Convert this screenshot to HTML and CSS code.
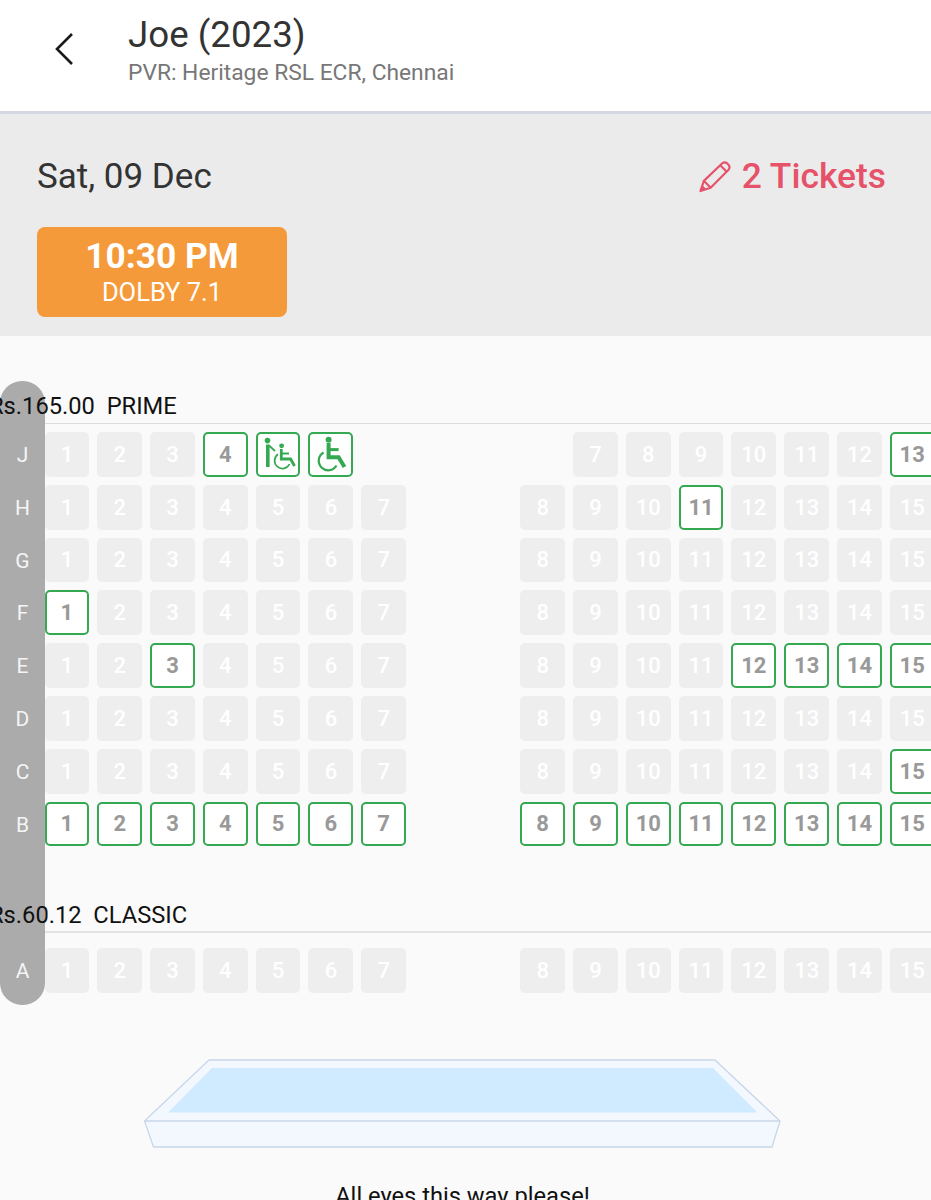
FILE: index.html
```html
<!DOCTYPE html>
<html lang="en">
<head>
    <meta charset="UTF-8">
    <meta name="viewport" content="width=device-width, initial-scale=1.0">
    <title>Joe (2023) - Seats</title>
    <link rel="stylesheet" href="styles.css">
</head>
<body>
    <div class="title-bar">
        <svg class="back-icon" width="20" height="34" viewBox="0 0 20 34"><path d="M18 2 L3 17 L18 32" fill="none" stroke="#1a1a1a" stroke-width="2.6"/></svg>
        <div>
            <h1>Joe (2023)</h1>
            <div class="subtitle">PVR: Heritage RSL ECR, Chennai</div>
        </div>
    </div>
    <div class="show-info">
        <div class="date-row">
            <span class="date">Sat, 09 Dec</span>
            <span class="tickets">
                <svg width="32" height="33" viewBox="0 0 33 33"><path d="M1.500 31.500 L5 21 L24 2.800 Q26.500 .8 29 3 L30.500 4.500 Q32.500 7 30.500 9.500 L12 28 Z M5 21 L12 28 M22 5 L28.500 11.500" fill="none" stroke="#e5526a" stroke-width="2.200" stroke-linejoin="round"/><path d="M1.500 31.500 L3.500 25.500 L7.500 29.500 Z" fill="#e5526a"/></svg>
                2 Tickets
            </span>
        </div>
        <div class="showtime">
            <div class="time">10:30 PM</div>
            <div class="format">DOLBY 7.1</div>
        </div>
    </div>
    <div class="seat-map">
        <div class="row-rail">
            <span>J</span><span>H</span><span>G</span><span>F</span><span>E</span><span>D</span><span>C</span><span>B</span>
            <span class="rail-a">A</span>
        </div>

        <div class="price-head prime"><span>Rs.165.00&nbsp; PRIME</span></div>
        <div class="rows">
            <div class="row">
                <div class="seat">1</div><div class="seat">2</div><div class="seat">3</div><div class="seat open">4</div>
                <div class="seat open">
                    <svg width="40" height="40" viewBox="0 0 40 40"><circle cx="9.500" cy="6.600" r="2.800" fill="#35a852"/><path d="M8 10.500 H11.600 V33 H8 Z" fill="#35a852"/><path d="M11 11.500 L17 17" stroke="#35a852" stroke-width="1.800"/><circle cx="23.600" cy="11.800" r="2.400" fill="#35a852"/><path d="M23.300 15 V25 H32.600 L36.500 32" fill="none" stroke="#35a852" stroke-width="2.800"/><path d="M24 19.500 H31" stroke="#35a852" stroke-width="2"/><path d="M20 20.300 A7.800 7.800 0 1 0 31.500 30" fill="none" stroke="#35a852" stroke-width="1.700"/></svg>
                </div>
                <div class="seat open">
                    <svg width="40" height="40" viewBox="0 0 40 40"><circle cx="17.600" cy="5.800" r="3" fill="#35a852"/><path d="M17.600 9 V23.300 H27.600 L33.500 33" fill="none" stroke="#35a852" stroke-width="4"/><path d="M18 15.600 H27.600" stroke="#35a852" stroke-width="3"/><path d="M12.600 18.500 A9.500 9.500 0 1 0 25.500 31.500" fill="none" stroke="#35a852" stroke-width="2.200"/></svg>
                </div>
                <div class="seat-empty"></div>
                <div class="seat-empty"></div><div class="seat">7</div><div class="seat">8</div><div class="seat">9</div><div class="seat">10</div><div class="seat">11</div><div class="seat">12</div><div class="seat open">13</div>
            </div>
            <div class="row">
                <div class="seat">1</div><div class="seat">2</div><div class="seat">3</div><div class="seat">4</div><div class="seat">5</div><div class="seat">6</div><div class="seat">7</div>
                <div class="seat">8</div><div class="seat">9</div><div class="seat">10</div><div class="seat open">11</div><div class="seat">12</div><div class="seat">13</div><div class="seat">14</div><div class="seat">15</div>
            </div>
            <div class="row">
                <div class="seat">1</div><div class="seat">2</div><div class="seat">3</div><div class="seat">4</div><div class="seat">5</div><div class="seat">6</div><div class="seat">7</div>
                <div class="seat">8</div><div class="seat">9</div><div class="seat">10</div><div class="seat">11</div><div class="seat">12</div><div class="seat">13</div><div class="seat">14</div><div class="seat">15</div>
            </div>
            <div class="row">
                <div class="seat open">1</div><div class="seat">2</div><div class="seat">3</div><div class="seat">4</div><div class="seat">5</div><div class="seat">6</div><div class="seat">7</div>
                <div class="seat">8</div><div class="seat">9</div><div class="seat">10</div><div class="seat">11</div><div class="seat">12</div><div class="seat">13</div><div class="seat">14</div><div class="seat">15</div>
            </div>
            <div class="row">
                <div class="seat">1</div><div class="seat">2</div><div class="seat open">3</div><div class="seat">4</div><div class="seat">5</div><div class="seat">6</div><div class="seat">7</div>
                <div class="seat">8</div><div class="seat">9</div><div class="seat">10</div><div class="seat">11</div><div class="seat open">12</div><div class="seat open">13</div><div class="seat open">14</div><div class="seat open">15</div>
            </div>
            <div class="row">
                <div class="seat">1</div><div class="seat">2</div><div class="seat">3</div><div class="seat">4</div><div class="seat">5</div><div class="seat">6</div><div class="seat">7</div>
                <div class="seat">8</div><div class="seat">9</div><div class="seat">10</div><div class="seat">11</div><div class="seat">12</div><div class="seat">13</div><div class="seat">14</div><div class="seat">15</div>
            </div>
            <div class="row">
                <div class="seat">1</div><div class="seat">2</div><div class="seat">3</div><div class="seat">4</div><div class="seat">5</div><div class="seat">6</div><div class="seat">7</div>
                <div class="seat">8</div><div class="seat">9</div><div class="seat">10</div><div class="seat">11</div><div class="seat">12</div><div class="seat">13</div><div class="seat">14</div><div class="seat open">15</div>
            </div>
            <div class="row">
                <div class="seat open">1</div><div class="seat open">2</div><div class="seat open">3</div><div class="seat open">4</div><div class="seat open">5</div><div class="seat open">6</div><div class="seat open">7</div>
                <div class="seat open">8</div><div class="seat open">9</div><div class="seat open">10</div><div class="seat open">11</div><div class="seat open">12</div><div class="seat open">13</div><div class="seat open">14</div><div class="seat open">15</div>
            </div>
        </div>

        <div class="price-head classic"><span>Rs.60.12&nbsp; CLASSIC</span></div>
        <div class="rows">
            <div class="row">
                <div class="seat">1</div><div class="seat">2</div><div class="seat">3</div><div class="seat">4</div><div class="seat">5</div><div class="seat">6</div><div class="seat">7</div>
                <div class="seat">8</div><div class="seat">9</div><div class="seat">10</div><div class="seat">11</div><div class="seat">12</div><div class="seat">13</div><div class="seat">14</div><div class="seat">15</div>
            </div>
        </div>

        <div class="screen">
            <svg width="931" height="92" viewBox="0 0 931 92">
                <path d="M144.500 62 L209 1 H715 L780 62 L772 88 H153.500 Z" fill="#f2f8fe" stroke="#c9d6ea" stroke-width="1.300" stroke-linejoin="round"/>
                <path d="M144.500 62 H780" stroke="#c9d6ea" stroke-width="1.500"/>
                <path d="M212 9 H713 L757.500 53.500 H168 Z" fill="#d0ebff"/>
            </svg>
        </div>
        <div class="screen-note">All eyes this way please!</div>
    </div>
</body>
</html>
```

FILE: styles.css
```css
html, body {
    margin: 0;
    padding: 0;
    height: 1200px;
    overflow: hidden;
}
body {
    font-family: Roboto, "Liberation Sans", sans-serif;
    background-color: #fafafa;
}
.title-bar {
    display: flex;
    align-items: center;
    gap: 54px;
    box-sizing: border-box;
    height: 114px;
    padding: 0 0 11.500px 54px;
    background-color: #fff;
    border-bottom: 3px solid #d6d7e5;
}
.back-icon {
    flex: none;
    margin-top: -2px;
}
.title-bar h1 {
    margin: 0;
    font-size: 36.700px;
    font-weight: 400;
    line-height: 42px;
    color: #333;
}
.subtitle {
    margin-top: 4.500px;
    font-size: 22.800px;
    line-height: 26px;
    color: #777;
}
.show-info {
    box-sizing: border-box;
    height: 222px;
    padding: 42px 45px 0 37px;
    background-color: #ebebeb;
}
.date-row {
    display: flex;
    justify-content: space-between;
    align-items: center;
    height: 40px;
}
.date {
    font-size: 35px;
    color: #333;
}
.tickets {
    display: flex;
    align-items: center;
    gap: 11px;
    font-size: 35.400px;
    font-weight: 500;
    color: #e5526a;
}
.showtime {
    box-sizing: border-box;
    width: 250px;
    height: 90px;
    margin-top: 31px;
    padding-top: 9px;
    background-color: #f59a3b;
    border-radius: 8px;
    color: #fff;
    text-align: center;
}
.time {
    font-size: 35.300px;
    font-weight: 700;
    line-height: 40px;
}
.format {
    margin-top: 1px;
    font-size: 25.500px;
    line-height: 30px;
}
.seat-map {
    position: relative;
    padding-top: 1px;
}
.row-rail {
    position: absolute;
    top: 45px;
    left: 0;
    z-index: 1;
    box-sizing: border-box;
    width: 45px;
    height: 624px;
    padding-top: 48px;
    display: flex;
    flex-direction: column;
    align-items: center;
    background-color: #ababab;
    border-radius: 22px;
    color: #f5f5f5;
    font-size: 21px;
}
.row-rail span {
    height: 52.800px;
    line-height: 52.800px;
}
.row-rail .rail-a {
    margin-top: 94px;
}
.price-head {
    box-sizing: border-box;
    margin-top: 55px;
    height: 32px;
    text-indent: -11px;
    font-size: 23.700px;
    line-height: 28px;
    color: #111;
    white-space: nowrap;
}
.price-head span {
    position: relative;
    z-index: 2;
}
.prime {
    border-bottom: 1.500px solid #ddd;
}
.classic {
    border-bottom: 2px solid #e2e2e2;
}
.rows {
    display: flex;
    flex-direction: column;
    gap: 8px;
    padding: 8px 0 0 44.500px;
}
.classic + .rows {
    padding-top: 15px;
}
.row {
    display: grid;
    grid-template-columns: repeat(7, 44.800px) 98.200px repeat(8, 44.800px);
    gap: 8px;
    height: 44.800px;
}
.row > :nth-child(8) {
    grid-column: 9;
}
.seat, .seat-empty {
    box-sizing: border-box;
    height: 44.800px;
}
.seat {
    display: flex;
    align-items: center;
    justify-content: center;
    background-color: #eeeeee;
    border-radius: 5px;
    color: #fff;
    font-size: 22px;
    font-weight: 500;
}
.seat.open {
    background-color: #fff;
    border: 2.500px solid #35a852;
    color: #999;
    font-weight: 700;
}
.seat.open svg {
    flex: none;
}
.screen {
    margin-top: 66px;
}
.screen svg {
    display: block;
}
.screen-note {
    margin-top: 31px;
    padding-right: 6px;
    font-size: 23.700px;
    line-height: 28px;
    color: #111;
    text-align: center;
}
```
